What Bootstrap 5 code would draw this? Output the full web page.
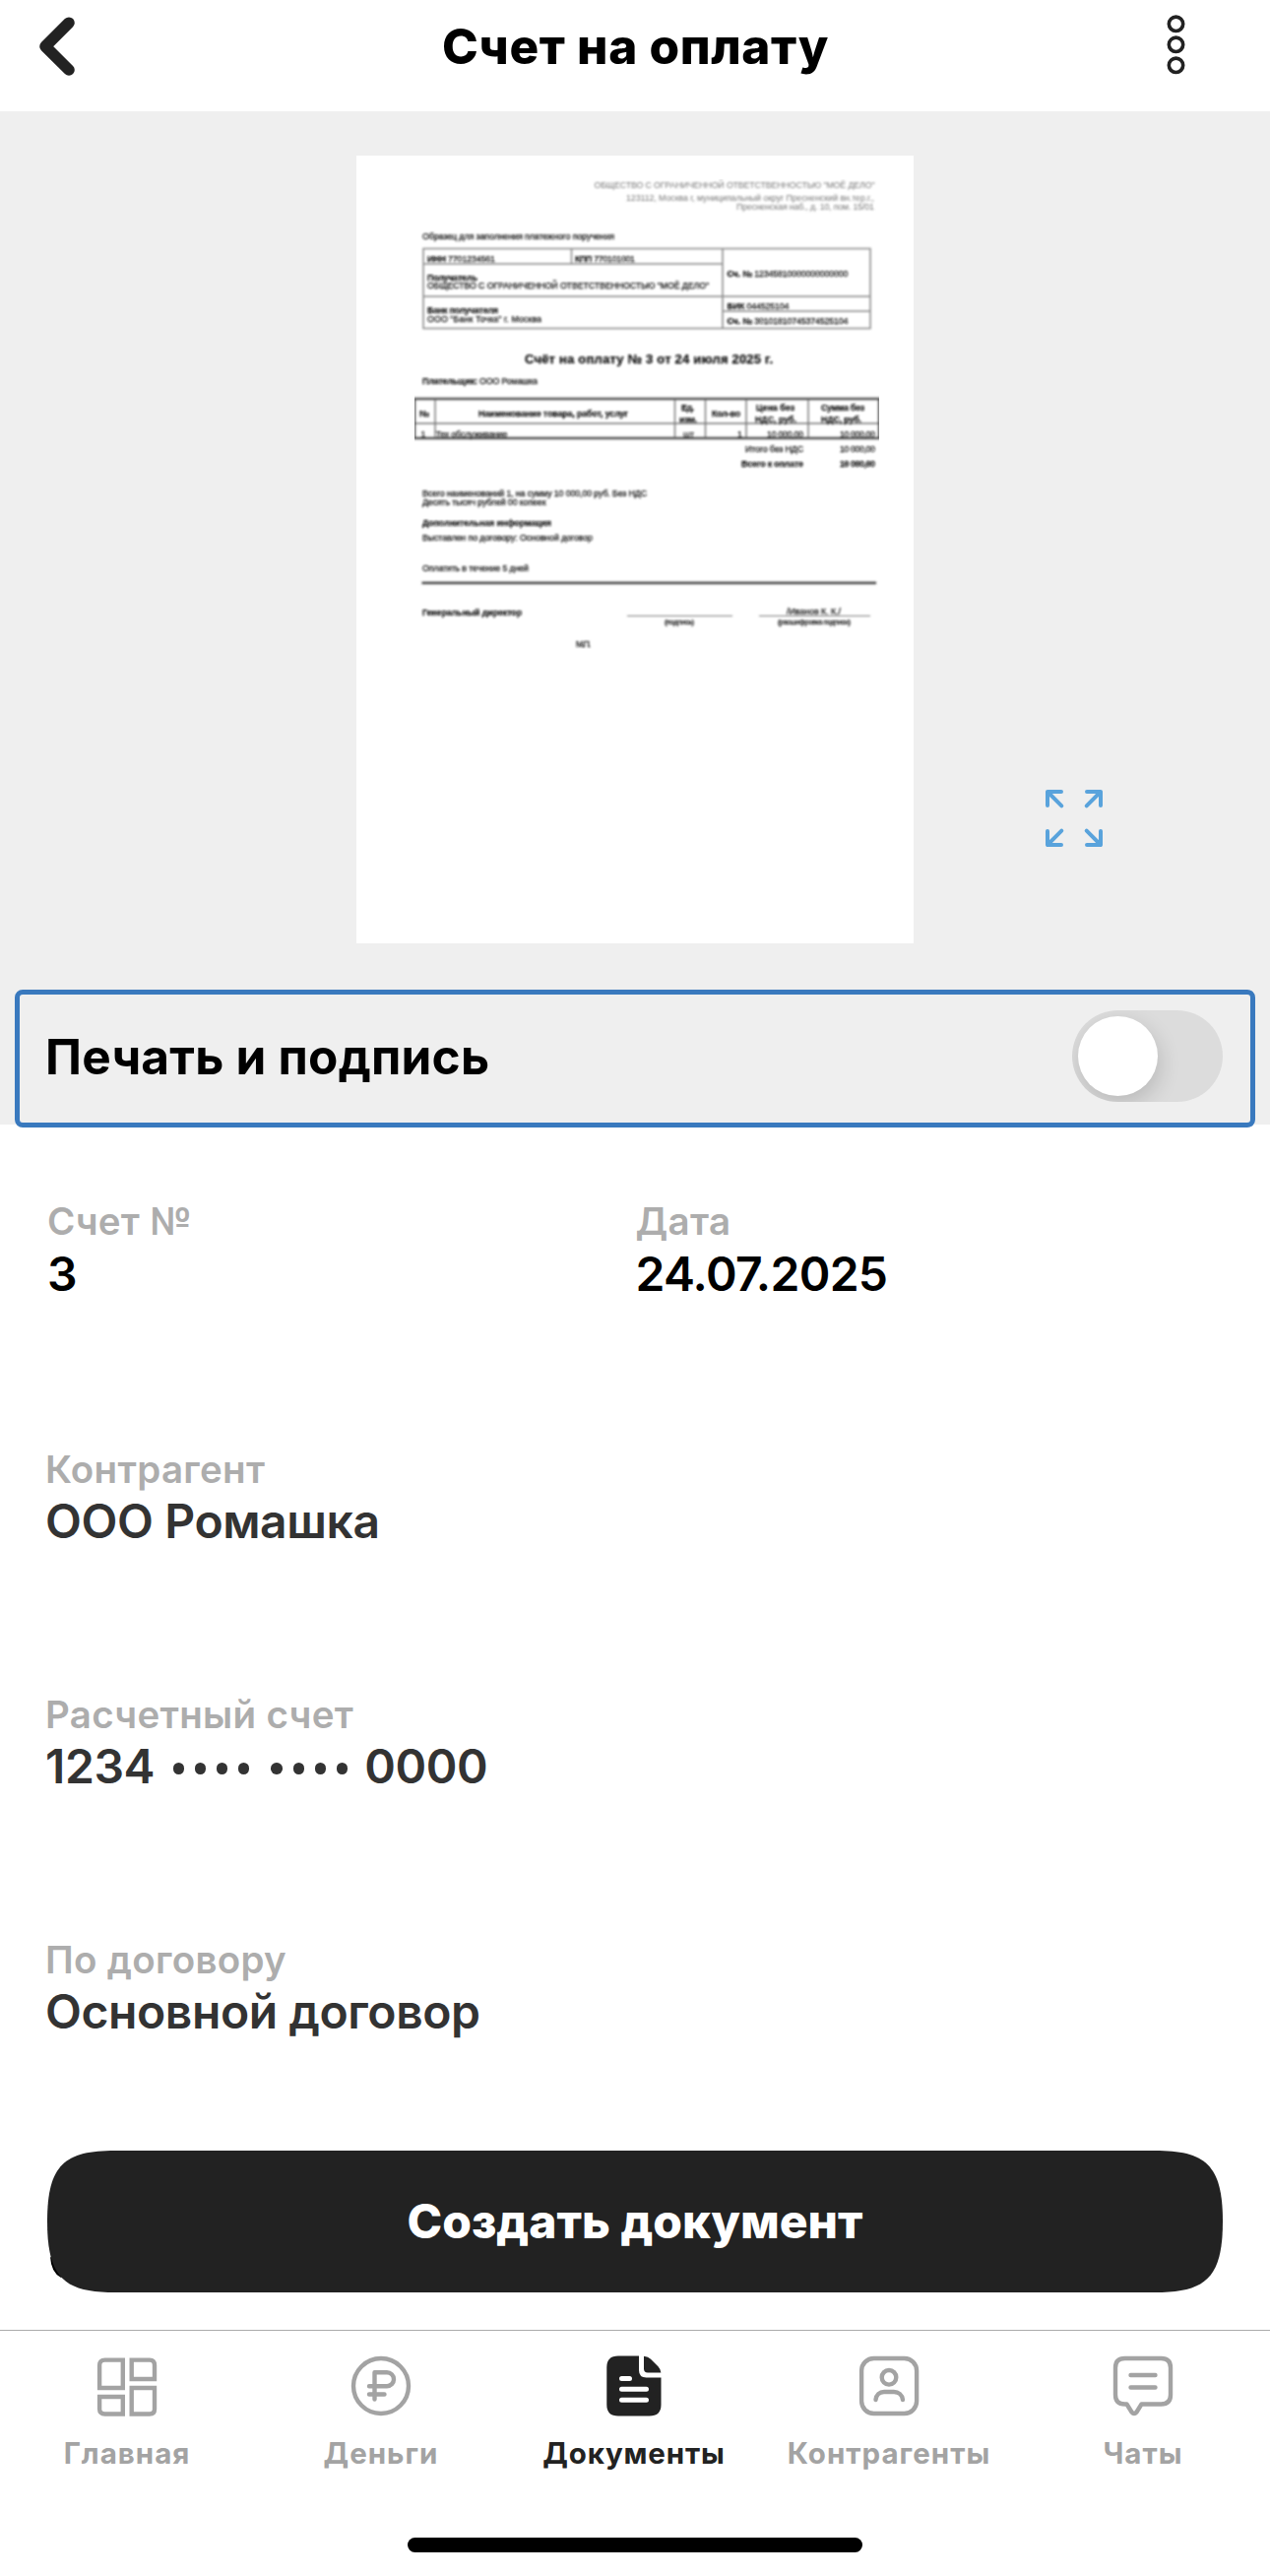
<!DOCTYPE html>
<html lang="ru">
<head>
<meta charset="utf-8">
<meta name="viewport" content="width=device-width, initial-scale=1">
<title>Счет на оплату</title>
<link href="https://cdn.jsdelivr.net/npm/bootstrap@5.3.0/dist/css/bootstrap.min.css" rel="stylesheet">
<style>
body{font-family:Inter,"Noto Sans",sans-serif;color:#000;background:#fff;width:1290px;overflow-x:hidden}
svg{display:block;overflow:visible}
.topbar{height:113px;padding:0 83px 19px 40px}
.topbar h1{font-size:49.5px;line-height:94px;font-weight:800;letter-spacing:.65px;padding-left:33px}
.preview{background:#efefef;height:1029px;padding-top:45px}
.sheet{width:566px;height:800px;background:#fff}
.expand{right:170px;top:689px}
.stamp{height:140px;margin:47px 15px 0;border:5px solid #3979be;border-radius:8px;background:#efefef;padding:0 28px 5px 26px}
.stamp-label{font-size:49.5px;font-weight:700;line-height:60px;letter-spacing:.22px}
.toggle{width:153px;height:93px;border-radius:47px;background:#dcdcdc;padding:6px;overflow:hidden}
.knob{width:81px;height:81px;border-radius:50%;background:#fff;box-shadow:2px 8px 22px rgba(0,0,0,.16)}
.fields{padding:74px 45px 0 46px}
.field{height:106px;margin-bottom:143px}
.field-first{margin-bottom:146px}
.field-first .col-6:first-child{padding-left:2px}
.lbl{font-size:38.5px;line-height:48px;font-weight:600;color:#adadad;letter-spacing:.3px}
.val{font-size:48px;line-height:58px;font-weight:600;color:#333;white-space:nowrap;letter-spacing:-.4px}
.field-first .val{color:#000;line-height:59px;letter-spacing:-.7px}
.dots4{display:inline-flex;gap:10.6px}
.dots4 i{width:11.5px;height:11.5px;border-radius:50%;background:#333}
.dots-a{margin:4px 22px 0 18.5px}
.dots-b{margin:4px 17px 0 0}
.cta{margin:-31px 48px 38px;height:144px;color:#fff;font-size:48px;font-weight:800;line-height:143px}
.cta svg{position:absolute;left:0;top:0}
.cta span{position:relative}
.tabs{border-top:1px solid #ababab;padding-top:25px;height:211px}
.tab{width:258px;color:#a3a3a3;font-size:29.5px;font-weight:700;line-height:38px;letter-spacing:1px}
.tab svg{width:62px;height:62px;margin-bottom:18px}
.tab.on{color:#222;padding-right:2px;letter-spacing:.85px}
.home-bar{width:462px;height:15px;border-radius:8px;background:#000}
</style>
<script src="https://cdn.jsdelivr.net/npm/bootstrap@5.3.0/dist/js/bootstrap.bundle.min.js"></script>
</head>
<body>
<header class="topbar d-flex align-items-center justify-content-between">
  <svg width="36" height="60" viewBox="40 17 36 60" fill="none" stroke="#222" stroke-width="11.6" stroke-linecap="round" stroke-linejoin="round"><path d="M70 23.2 46 47.2 70 71"/></svg>
  <h1 class="m-0">Счет на оплату</h1>
  <svg width="25" height="66" viewBox="1182 14 25 66" fill="none" stroke="#222" stroke-width="3.6"><circle cx="1194.5" cy="24.3" r="7.2"/><circle cx="1194.5" cy="45.3" r="7.2"/><circle cx="1194.5" cy="66.3" r="7.2"/></svg>
</header>

<section class="preview position-relative">
  <div class="sheet mx-auto">
    <svg width="566" height="800" viewBox="362 158 566 800" font-family="Liberation Sans, Arial, sans-serif" font-size="8.8">
      <defs><filter id="soft" x="0" y="0" width="1" height="1"><feGaussianBlur stdDeviation="1.2 0.95"/></filter></defs>
      <g filter="url(#soft)" fill="#111">
        <g fill="#777">
          <text x="603.5" y="191" textLength="285">ОБЩЕСТВО С ОГРАНИЧЕННОЙ ОТВЕТСТВЕННОСТЬЮ "МОЁ ДЕЛО"</text>
          <text x="636" y="203.5" textLength="252">123112, Москва г, муниципальный округ Пресненский вн.тер.г.,</text>
          <text x="748" y="212.5" textLength="140">Пресненская наб., д. 10, пом. 15/01</text>
        </g>
        <path fill="none" stroke="#888" stroke-width="1.5" d="M430 252.5H884V333.5H430ZM734 252.5V333.5M580.5 252.5V268M430 268H734M430 301H884M734 316H884"/>
        <g stroke="#111" stroke-width=".25">
        <text x="429" y="242.5" textLength="195">Образец для заполнения платежного поручения</text>
        <text x="434" y="266.3" textLength="69"><tspan font-weight="700">ИНН</tspan> 7701234561</text>
        <text x="584" y="266.3" textLength="61"><tspan font-weight="700">КПП</tspan> 770101001</text>
        <text x="434" y="284.5" textLength="51" font-weight="700">Получатель</text>
        <text x="434" y="293.3" textLength="286">ОБЩЕСТВО С ОГРАНИЧЕННОЙ ОТВЕТСТВЕННОСТЬЮ "МОЁ ДЕЛО"</text>
        <text x="738.5" y="281.3" textLength="123"><tspan font-weight="700">Сч. №</tspan> 12345810000000000000</text>
        <text x="434" y="317.5" textLength="72" font-weight="700">Банк получателя</text>
        <text x="434" y="326.6" textLength="116">ООО "Банк Точка" г. Москва</text>
        <text x="738.5" y="314.3" textLength="63"><tspan font-weight="700">БИК</tspan> 044525104</text>
        <text x="738.5" y="329.3" textLength="123"><tspan font-weight="700">Сч. №</tspan> 30101810745374525104</text>
        <text x="533" y="368.6" textLength="252" font-size="13" font-weight="700">Счёт на оплату № 3 от 24 июля 2025 г.</text>
        <text x="429" y="389.6" textLength="117"><tspan font-weight="700">Плательщик:</tspan> ООО Ромашка</text>
        </g>
        <path fill="none" stroke="#777" stroke-width="1.4" d="M442 405V445M685.5 405V445M716.5 405V445M758 405V445M821 405V445M421 430H893"/>
        <path fill="none" stroke="#555" stroke-width="2.4" d="M421 405H893V445H421Z"/>
        <g font-weight="700" stroke="#111" stroke-width=".25">
          <text x="426" y="422.8">№</text>
          <text x="486" y="422.8" textLength="152">Наименование товара, работ, услуг</text>
          <text x="692" y="416.8" textLength="13">Ед.</text><text x="690" y="429" textLength="18">изм.</text>
          <text x="723" y="422.8" textLength="29">Кол-во</text>
          <text x="768" y="416.8" textLength="39">Цена без</text><text x="767" y="429" textLength="42">НДС, руб.</text>
          <text x="834" y="416.8" textLength="44">Сумма без</text><text x="834" y="429" textLength="41">НДС, руб.</text>
          <text x="753" y="473.7" textLength="63">Всего к оплате</text><text x="853" y="473.7" textLength="36">10 000,00</text>
          <text x="429" y="534" textLength="131">Дополнительная информация</text>
          <text x="429" y="624.5" textLength="101">Генеральный директор</text>
        </g>
        <g stroke="#111" stroke-width=".25">
        <text x="427.5" y="444">1</text><text x="442.5" y="444" textLength="73">Тех обслуживание</text><text x="694" y="444" textLength="11">шт</text><text x="749" y="444">1</text><text x="779" y="444" textLength="37">10 000,00</text><text x="853" y="444" textLength="36">10 000,00</text>
        <text x="757" y="458.7" textLength="59">Итого без НДС</text><text x="853" y="458.7" textLength="36">10 000,00</text>
        <text x="429" y="503.8" textLength="228">Всего наименований 1, на сумму 10 000,00 руб. Без НДС</text>
        <text x="429" y="513" textLength="125.5">Десять тысяч рублей 00 копеек</text>
        <text x="429" y="549" textLength="173">Выставлен по договору: Основной договор</text>
        <text x="429" y="579.5" textLength="108">Оплатить в течение 5 дней</text>
        <text x="799" y="624.3" textLength="55">/Иванов К. К./</text>
        <text x="675" y="634" font-size="7.5" textLength="30">(подпись)</text>
        <text x="790" y="634" font-size="7.5" textLength="74">(расшифровка подписи)</text>
        <text x="585" y="657" textLength="15">М.П.</text>
        </g>
        <path stroke="#444" stroke-width="2.4" d="M428.5 592H890"/>
        <path stroke="#777" stroke-width="1.2" d="M637 625.5H744M771 625.5H884"/>
      </g>
    </svg>
  </div>
  <svg class="expand position-absolute" width="58" height="58" viewBox="0 0 58 58" fill="none" stroke="#59a3dc" stroke-width="4" stroke-linecap="round" stroke-linejoin="round"><path d="M2 16V2H16M2 2 16.3 16.3M42 2H56V16M56 2 41.7 16.3M2 42V56H16M2 56 16.3 41.7M56 42V56H42M56 56 41.7 41.7"/></svg>
  <div class="stamp d-flex align-items-center justify-content-between">
    <span class="stamp-label">Печать и подпись</span>
    <div class="toggle" role="switch" aria-checked="false"><div class="knob"></div></div>
  </div>
</section>

<main class="fields">
  <div class="field field-first row gx-0">
    <div class="col-6"><div class="lbl">Счет №</div><div class="val">3</div></div>
    <div class="col-6"><div class="lbl">Дата</div><div class="val">24.07.2025</div></div>
  </div>
  <div class="field"><div class="lbl">Контрагент</div><div class="val">ООО Ромашка</div></div>
  <div class="field"><div class="lbl">Расчетный счет</div><div class="val d-flex align-items-center"><span>1234</span><span class="dots4 dots-a"><i></i><i></i><i></i><i></i></span><span class="dots4 dots-b"><i></i><i></i><i></i><i></i></span><span>0000</span></div></div>
  <div class="field"><div class="lbl">По договору</div><div class="val">Основной договор</div></div>
</main>

<div class="cta text-center position-relative">
  <svg width="1194" height="144" viewBox="0 0 1194 144"><path fill="#000" d="M3 108Q4 124 14 129L26 120Z"/><path fill="#222" d="M69 0H1125C1176 0 1194 14 1194 72S1176 144 1125 144H69C18 144 0 130 0 72S18 0 69 0Z"/></svg>
  <span>Создать документ</span>
</div>

<nav class="tabs d-flex">
  <div class="tab d-flex flex-column align-items-center">
    <svg viewBox="0 0 62 62" fill="none" stroke="currentColor" stroke-width="4.4"><path d="M8.5 4.6H26.8V33H3.1V10Q3.1 4.6 8.5 4.6ZM35.7 4.6H54Q59 4.6 59 10V24H35.7ZM35.7 33H59V54.5Q59 59.5 54 59.5H35.7ZM3.1 42H26.8V59.5H8.5Q3.1 59.5 3.1 54.5Z"/></svg>Главная</div>
  <div class="tab d-flex flex-column align-items-center">
    <svg viewBox="0 0 62 62" fill="none" stroke="currentColor" stroke-width="4.4" stroke-linecap="round" stroke-linejoin="round"><circle cx="31" cy="31" r="28"/><path d="M24.5 44.5V17.2H37A6.9 6.9 0 0 1 37 31.2H19M19 39.5H34.5"/></svg>Деньги</div>
  <div class="tab on d-flex flex-column align-items-center">
    <svg viewBox="0 0 62 62"><path fill="currentColor" d="M15 .5H36V15Q36 22.5 43.5 22.5H58.5V50Q58.5 61.5 46.5 61.5H15Q3.3 61.5 3.3 50V12Q3.3 .5 15 .5ZM41 .8Q45.5 1.2 48 3.8L55.5 11.3Q58 14 58.4 17.5H45Q41 17.5 41 13.5Z"/><path stroke="#fff" stroke-width="5" stroke-linecap="round" d="M18.5 23.5H26.5M18.5 34.3H43.5M18.5 45.3H43.5"/></svg>Документы</div>
  <div class="tab d-flex flex-column align-items-center">
    <svg viewBox="0 0 62 62" fill="none" stroke="currentColor" stroke-width="4.4" stroke-linecap="round"><rect x="3.1" y="3" width="56" height="56" rx="12.5"/><circle cx="31" cy="22.3" r="7.3"/><path d="M17.5 45C18 40 21.5 37 26 37H36C40.5 37 44.5 40 45 45"/></svg>Контрагенты</div>
  <div class="tab d-flex flex-column align-items-center">
    <svg viewBox="0 0 62 62" fill="none" stroke="currentColor" stroke-width="4.4" stroke-linecap="round" stroke-linejoin="round"><path d="M12.5 3H49.5Q59 3 59 12.5V40Q59 49.5 49.5 49.5H29.5L24.5 57.5Q22 60.5 19.5 57.5L14.5 49.5H12.5Q3 49.5 3 40V12.5Q3 3 12.5 3ZM18.5 20H43.5M18.5 32.5H43.5"/></svg>Чаты</div>
</nav>
<div class="home-bar mx-auto"></div>
</body>
</html>
